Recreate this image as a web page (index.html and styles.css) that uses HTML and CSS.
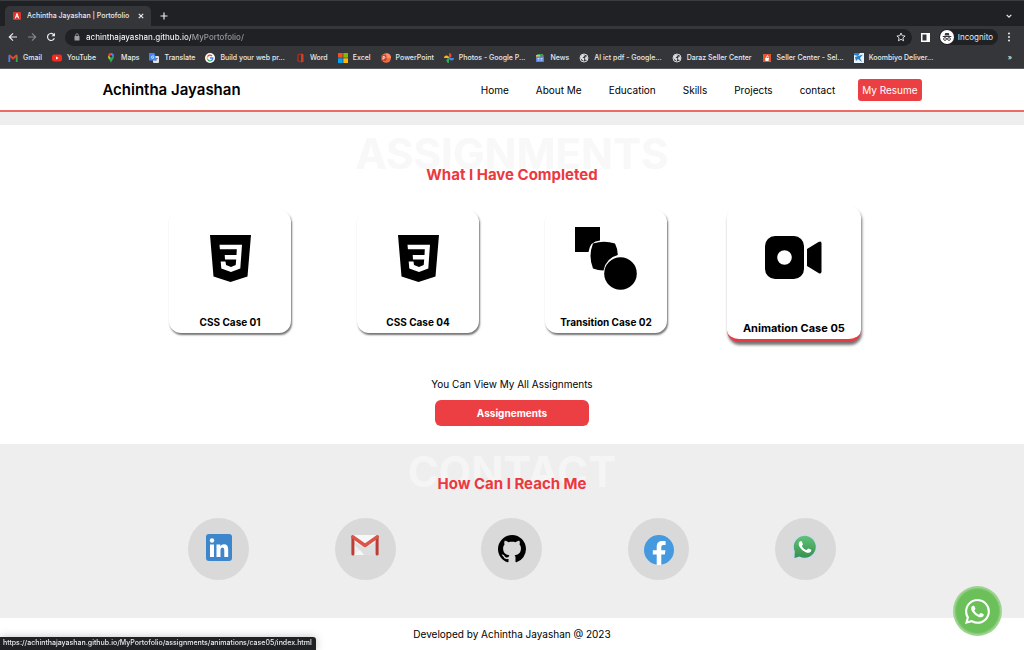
FILE: index.html
```html
<!DOCTYPE html>
<html lang="en">
<head>
<meta charset="utf-8">
<meta name="viewport" content="width=device-width, initial-scale=1">
<title>Achintha Jayashan | Portofolio</title>
<link rel="stylesheet" href="styles.css">
</head>
<body>
<svg class="defs" aria-hidden="true">
  <symbol id="whatsapp" viewBox="0 0 16 16"><path d="M13.601 2.326A7.85 7.85 0 0 0 7.994 0C3.627 0 .068 3.558.064 7.926c0 1.399.366 2.76 1.057 3.965L0 16l4.204-1.102a7.9 7.9 0 0 0 3.79.965h.004c4.368 0 7.926-3.558 7.93-7.93A7.9 7.9 0 0 0 13.6 2.326zM7.994 14.521a6.6 6.6 0 0 1-3.356-.92l-.24-.144-2.494.654.666-2.433-.156-.251a6.56 6.56 0 0 1-1.007-3.505c0-3.626 2.957-6.584 6.591-6.584a6.56 6.56 0 0 1 4.66 1.931 6.56 6.56 0 0 1 1.928 4.66c-.004 3.639-2.961 6.592-6.592 6.592"/></symbol>
  <symbol id="handset" viewBox="0 0 16 16"><path d="M11.609 9.587c-.197-.099-1.17-.578-1.353-.646-.182-.065-.315-.099-.445.099-.133.197-.513.646-.627.775-.114.133-.232.148-.43.05-.197-.1-.836-.308-1.592-.985-.59-.525-.985-1.175-1.103-1.372-.114-.198-.011-.304.088-.403.087-.088.197-.232.296-.346.1-.114.133-.198.198-.33.065-.134.034-.248-.015-.347-.05-.099-.445-1.076-.612-1.47-.16-.389-.323-.335-.445-.34-.114-.007-.247-.007-.38-.007a.73.73 0 0 0-.529.247c-.182.198-.691.677-.691 1.654s.71 1.916.81 2.049c.098.133 1.394 2.132 3.383 2.992.47.205.84.326 1.129.418.475.152.904.129 1.246.08.38-.058 1.171-.48 1.338-.943.164-.464.164-.86.114-.943-.049-.084-.182-.133-.38-.232"/></symbol>
  <symbol id="css3" viewBox="0 0 41 47"><path fill-rule="evenodd" d="M0 0H41L37.5 41.5 20.5 47 3.5 41.5ZM9.5 9.7 9.9 14.3H26.8L26.5 20H14.7L15 24.5H26.2L25.7 30 21 32 16 30 15.5 26.5H10.7L11.3 33.5 21 37 30.3 33.5 32 9.7Z"/></symbol>
  <symbol id="globe" viewBox="0 0 10 10"><circle cx="5" cy="5" r="4" fill="none" stroke="#dcdde0" stroke-width="1"/><path fill="#dcdde0" d="M1.5 3 4 1.5 6 2 5 3.5 3.5 4.5 5.5 5.5 4.5 8.5 3.5 7 1.5 5.5ZM6.5 3.5 8.5 3.5V6L7 7.5 6 6Z"/></symbol>
</svg>

<div class="browser">
  <div class="tabs">
    <div class="tab">
      <svg class="favicon" viewBox="0 0 8 8" aria-hidden="true"><rect width="8" height="8" rx="1" fill="#d8382c"/><path d="M2.2 6.5 4 1.5 5.8 6.5M3 4.8H5" fill="none" stroke="#fff" stroke-width="1"/></svg>
      <span class="tab-title">Achintha Jayashan | Portofolio</span>
      <button class="icon-btn" aria-label="Close tab"><svg width="6" height="6" viewBox="0 0 6 6"><path d="M.8.8 5.2 5.2M5.2.8.8 5.2" class="line"/></svg></button>
    </div>
    <button class="icon-btn" aria-label="New tab"><svg width="8" height="8" viewBox="0 0 8 8"><path d="M4 .5V7.5M.5 4H7.5" class="line"/></svg></button>
    <button class="icon-btn tab-search" aria-label="Search tabs"><svg width="6" height="6" viewBox="0 0 6 6"><path d="M.7 1.8 3 4.2 5.3 1.8" class="line"/></svg></button>
  </div>
  <div class="toolbar">
    <button class="icon-btn" aria-label="Back"><svg width="10" height="10" viewBox="0 0 10 10"><path d="M9 5H1.5M5 1.3 1.3 5 5 8.7" class="line"/></svg></button>
    <button class="icon-btn dim" aria-label="Forward"><svg width="10" height="10" viewBox="0 0 10 10"><path d="M1 5H8.5M5 1.3 8.7 5 5 8.7" class="line"/></svg></button>
    <button class="icon-btn" aria-label="Reload"><svg width="10" height="10" viewBox="0 0 10 10"><path d="M8.3 6.2A3.5 3.5 0 1 1 7.5 2.5L8.5 3.5" class="line"/><path d="M9 .8V4.3H5.5Z" fill="currentColor"/></svg></button>
    <div class="address">
      <svg width="6" height="8" viewBox="0 0 6 8" aria-hidden="true"><rect x=".5" y="3" width="5" height="4.5" rx=".6" fill="#9aa0a6"/><path d="M1.7 3V2a1.3 1.3 0 0 1 2.6 0V3" fill="none" stroke="#9aa0a6" stroke-width=".8"/></svg>
      <input class="url" type="text" aria-label="Address" value="achinthajayashan.github.io/MyPortofolio/">
      <button class="icon-btn" aria-label="Bookmark this page"><svg width="10" height="10" viewBox="0 0 10 10"><path d="M5 1 6.2 3.7 9.1 4 6.9 5.9 7.6 8.8 5 7.3 2.4 8.8 3.1 5.9.9 4 3.8 3.7Z" fill="none" stroke="currentColor" stroke-width=".9"/></svg></button>
    </div>
    <button class="icon-btn" aria-label="Side panel"><svg width="9" height="9" viewBox="0 0 9 9"><path fill="#fff" fill-rule="evenodd" d="M0 0H9V9H0ZM1.5 1.5V7.5H5.5V1.5Z"/></svg></button>
    <button class="incognito"><svg width="14" height="14" viewBox="0 0 14 14" aria-hidden="true"><circle cx="7" cy="7" r="7" fill="#fff"/><path fill="#35363a" d="M4.5 5.5 5.3 3H8.7L9.5 5.5ZM2.7 6H11.3V7H2.7Z"/><g fill="none" stroke="#35363a" stroke-width=".9"><circle cx="5" cy="9" r="1.4"/><circle cx="9" cy="9" r="1.4"/><path d="M6.4 8.7H7.6"/></g></svg>Incognito</button>
    <button class="icon-btn" aria-label="Menu"><svg width="4" height="10" viewBox="0 0 4 10" fill="currentColor"><circle cx="2" cy="1.5" r="1"/><circle cx="2" cy="5" r="1"/><circle cx="2" cy="8.5" r="1"/></svg></button>
  </div>
  <nav class="bookmarks" aria-label="Bookmarks">
    <a href="#"><svg viewBox="0 0 10 10"><path d="M1.3 9V2.5" stroke="#4285f4" stroke-width="1.8"/><path d="M8.7 9V2.5" stroke="#34a853" stroke-width="1.8"/><path d="M1 2 5 5.5 9 2" fill="none" stroke="#ea4335" stroke-width="2"/></svg>Gmail</a>
    <a href="#"><svg viewBox="0 0 10 10"><rect y="1.5" width="10" height="7" rx="2" fill="#f52b20"/><path fill="#fff" d="M4 3.5V6.5L6.6 5Z"/></svg>YouTube</a>
    <a href="#"><svg viewBox="0 0 10 10"><path fill="#34a853" d="M5 10C4.5 7.5 2 6 2 3.5L5 0 8 3.5C8 6 5.5 7.5 5 10Z"/><path fill="#4285f4" d="M5 0A3.2 3.2 0 0 1 8 3L5 4Z"/><path fill="#ea4335" d="M5 0A3.2 3.2 0 0 0 2 3L5 4Z"/><path fill="#fbbc04" d="M2 3 5 4 3 6.5Z"/><circle cx="5" cy="3.4" r="1.2" fill="#35363a"/></svg>Maps</a>
    <a href="#"><svg viewBox="0 0 10 10"><rect x="4" y="3" width="6" height="7" rx="1" fill="#dfe1e5"/><path d="M6 5.5H9M7.5 5V6L6.5 8" fill="none" stroke="#6b7075" stroke-width=".7"/><path fill="#4285f4" d="M0 0H5.5L7.5 7.5H0Z"/><path d="M5 3H3.5A1.2 1.2 0 1 0 4.8 4.2H3.8" fill="none" stroke="#fff" stroke-width=".7"/></svg>Translate</a>
    <a href="#"><svg viewBox="0 0 10 10"><circle cx="5" cy="5" r="5" fill="#fff"/><g fill="none" stroke-width="1.3"><path stroke="#ea4335" d="M2.5 3.7A2.8 2.8 0 0 1 7 3"/><path stroke="#fbbc04" d="M2.5 3.7A2.8 2.8 0 0 0 2.5 6.3"/><path stroke="#34a853" d="M2.5 6.3A2.8 2.8 0 0 0 6.8 7.2"/><path stroke="#4285f4" d="M5 5H7.8A2.8 2.8 0 0 1 6.8 7.2"/></g></svg>Build your web pr...</a>
    <a href="#"><svg viewBox="0 0 10 10"><path fill="#d83b20" d="M6 .5 8.5 1.3V8.7L6 9.5Z"/><path d="M6 1 3 2V7L2 7.5M2.5 7.5 6 9" fill="none" stroke="#b92b1b" stroke-width="1.3"/></svg>Word</a>
    <a href="#"><svg viewBox="0 0 10 10"><path fill="#f25022" d="M0 0H4.7V4.7H0Z"/><path fill="#7fba00" d="M5.3 0H10V4.7H5.3Z"/><path fill="#00a4ef" d="M0 5.3H4.7V10H0Z"/><path fill="#ffb900" d="M5.3 5.3H10V10H5.3Z"/></svg>Excel</a>
    <a href="#"><svg viewBox="0 0 10 10"><circle cx="5.2" cy="5" r="4.8" fill="#ed6c47"/><path fill="#ff8f6b" d="M5.2.2A4.8 4.8 0 0 1 10 5H5.2Z"/><rect y="2.3" width="5.4" height="5.4" rx=".6" fill="#c43e1c"/><path d="M2 6.7V3.5H3A.9.9 0 0 1 3 5.4H2" fill="none" stroke="#fff" stroke-width=".8"/></svg>PowerPoint</a>
    <a href="#"><svg viewBox="0 0 10 10"><path fill="#ea4335" d="M5 0A2.5 2.5 0 0 1 5 5Z"/><path fill="#4285f4" d="M10 5A2.5 2.5 0 0 1 5 5Z"/><path fill="#34a853" d="M5 10A2.5 2.5 0 0 1 5 5Z"/><path fill="#fbbc04" d="M0 5A2.5 2.5 0 0 1 5 5Z"/></svg>Photos - Google P...</a>
    <a href="#"><svg viewBox="0 0 10 10"><path fill="#34a853" d="M2 1H8V4H2Z"/><path fill="#ea4335" d="M6.5 1.5 9 2 8 5Z"/><path fill="#fbbc04" d="M1 2H5V4H1Z"/><rect x="1" y="3.5" width="8" height="5.5" rx=".7" fill="#5387ec"/><path d="M2.5 5.5H4.5M2.5 7H4.5M5.5 5.5H7.5M5.5 7H7.5" stroke="#fff" stroke-width=".7"/></svg>News</a>
    <a href="#"><svg><use href="#globe"/></svg>AI ict pdf - Google...</a>
    <a href="#"><svg><use href="#globe"/></svg>Daraz Seller Center</a>
    <a href="#"><svg viewBox="0 0 10 10"><rect x="1" y="1" width="8" height="8" fill="#e4572b"/><path fill="#fff" d="M3 5H7L6.5 8H3.5Z"/><path d="M4 5 5.5 2.5 6.5 4.5" fill="none" stroke="#fff" stroke-width=".8"/></svg>Seller Center - Sel...</a>
    <a href="#"><svg viewBox="0 0 10 10"><rect width="10" height="10" fill="#e8f2fa"/><path fill="#2b80c5" d="M0 0H6L4 3 0 2ZM1 4 9 1.5 6 5 8 9 4 6 2 8Z"/></svg>Koombiyo Deliver...</a>
    <a class="more" href="#" aria-label="More bookmarks">»</a>
  </nav>
</div>

<header class="site-header">
  <h1 class="brand">Achintha Jayashan</h1>
  <nav class="site-nav" aria-label="Main">
    <a href="#">Home</a>
    <a href="#">About Me</a>
    <a href="#">Education</a>
    <a href="#">Skills</a>
    <a href="#">Projects</a>
    <a href="#contact">contact</a>
    <a class="resume" href="#">My Resume</a>
  </nav>
</header>

<main>
  <section class="assignments">
    <p class="watermark" aria-hidden="true">ASSIGNMENTS</p>
    <h2 class="heading">What I Have Completed</h2>
    <div class="cards">
      <a class="card" href="#"><span class="card-art"><svg width="41" height="47"><use href="#css3"/></svg></span>CSS Case 01</a>
      <a class="card" href="#"><span class="card-art"><svg width="41" height="47"><use href="#css3"/></svg></span>CSS Case 04</a>
      <a class="card" href="#"><span class="card-art"><svg width="62" height="64" viewBox="0 0 62 64"><path d="M0 0H25V13.5Q15 14 13.5 25H0Z"/><path d="M18 16.5Q29 13 40 16.5 42.5 21 42.8 28 31 31 28.5 43.5 23 43.5 18 41.5 13 29 18 16.5Z"/><circle cx="45.5" cy="46.5" r="16.3"/></svg></span>Transition Case 02</a>
      <a class="card active" href="#"><span class="card-art"><svg width="58" height="44" viewBox="0 0 58 44"><path fill-rule="evenodd" d="M10 0H29A10 10 0 0 1 39 10V33A10 10 0 0 1 29 43H10A10 10 0 0 1 0 33V10A10 10 0 0 1 10 0ZM19.5 14.2A7.3 7.3 0 1 0 19.5 28.8 7.3 7.3 0 1 0 19.5 14.2Z"/><path d="M42 13 53.5 6Q56.5 4.500 56.5 7.5V35.5Q56.5 38.5 53.5 37L42 30Z"/></svg></span>Animation Case 05</a>
    </div>
    <p class="note">You Can View My All Assignments</p>
    <button class="view-all">Assignements</button>
  </section>

  <section class="contact" id="contact">
    <p class="watermark" aria-hidden="true">CONTACT</p>
    <h2 class="heading">How Can I Reach Me</h2>
    <div class="channels">
      <a class="channel" href="#" aria-label="LinkedIn"><svg width="32" height="32" viewBox="0 0 32 32"><rect x="3" y="1" width="26" height="27" rx="3" fill="#3d86cc"/><circle cx="9" cy="7.5" r="2.2" fill="#fff"/><path fill="#fff" d="M7 11.500H11V24H7ZM13.5 11.500H17.300V13.300Q18.500 11.200 21 11.200 25.200 11.200 25.200 16.500V24H21.300V17.300Q21.300 14.600 19.500 14.600 17.500 14.600 17.500 17.500V24H13.500Z"/></svg></a>
      <a class="channel" href="#" aria-label="Gmail"><svg width="32" height="32" viewBox="0 0 32 32"><path fill="#eee" d="M4 2H28V22H4Z"/><path fill="#dedede" d="M5 9 16 15 27 9V22H15L5 11Z"/><path fill="#f7f7f7" d="M5 2H27L16 11ZM5 22 11 17 15 22Z"/><path d="M3.9 4V21M28.1 4V21" stroke="#bd3c36" stroke-width="3" stroke-linecap="round"/><path d="M3.8 3.8 16 12.5 28.2 3.8" fill="none" stroke="#db5349" stroke-width="3.5" stroke-linejoin="round" stroke-linecap="round"/></svg></a>
      <a class="channel" href="#" aria-label="GitHub"><svg width="28" height="28" viewBox="0 0 16 16"><path d="M8 0C3.58 0 0 3.58 0 8c0 3.54 2.29 6.53 5.47 7.59.4.07.55-.17.55-.38 0-.19-.01-.82-.01-1.49-2.01.37-2.53-.49-2.69-.94-.09-.23-.48-.94-.82-1.13-.28-.15-.68-.52-.01-.53.63-.01 1.08.58 1.23.82.72 1.21 1.87.87 2.33.66.07-.52.28-.87.51-1.07-1.78-.2-3.64-.89-3.64-3.95 0-.87.31-1.59.82-2.15-.08-.2-.36-1.02.08-2.12 0 0 .67-.21 2.2.82.64-.18 1.32-.27 2-.27s1.36.09 2 .27c1.53-1.04 2.2-.82 2.2-.82.44 1.1.16 1.92.08 2.12.51.56.82 1.27.82 2.15 0 3.07-1.87 3.75-3.65 3.95.29.25.54.73.54 1.48 0 1.07-.01 1.93-.01 2.2 0 .21.15.46.55.38A8.01 8.01 0 0 0 16 8c0-4.42-3.58-8-8-8z"/></svg></a>
      <a class="channel" href="#" aria-label="Facebook"><svg width="32" height="32" viewBox="0 0 32 32"><circle cx="16" cy="17" r="15" fill="#4599df"/><path fill="#fff" d="M13.7 32V21.5H9.8V17.2H13.7V13.5Q13.7 8 19.3 8H22.6V12H20.3Q18.3 12 18.3 14V17.2H22.5L21.8 21.5H18.3V32Z"/></svg></a>
      <a class="channel" href="#" aria-label="WhatsApp"><svg width="32" height="32" viewBox="0 0 32 32"><defs><linearGradient id="wa" x1="0" y1="0" x2="0" y2="1"><stop offset="0" stop-color="#61c27b"/><stop offset="1" stop-color="#36904d"/></linearGradient></defs><path fill="#d0dae7" d="M2 28.5 3.500 20A13.300 13.300 0 1 1 9 25.800Z"/><path fill="url(#wa)" d="M5.500 25 5.800 18.500A11 11 0 1 1 10.500 23.500Z"/><use href="#handset" x="3.500" y="1.500" width="25" height="25" fill="#fff"/></svg></a>
    </div>
  </section>
</main>

<footer class="site-footer">Developed by Achintha Jayashan @ 2023</footer>

<a class="chat" href="#" aria-label="Chat on WhatsApp"><svg width="25" height="25" viewBox="0 0 16 16" fill="#fff"><use href="#whatsapp"/><use href="#handset"/></svg></a>
<div class="status">https://achinthajayashan.github.io/MyPortofolio/assignments/animations/case05/index.html</div>
</body>
</html>
```

FILE: styles.css
```css
* { box-sizing: border-box; }

body {
  margin: 0;
  min-height: 100vh;
  display: flex;
  flex-direction: column;
  background: #fff;
  color: #000;
  font-family: Inter, "Liberation Sans", sans-serif;
  font-size: 10px;
  line-height: 14px;
}

h1, h2, p { margin: 0; }
a { color: inherit; text-decoration: none; }
svg { display: block; flex: none; }
button { border: 0; font: inherit; color: inherit; cursor: pointer; }
.defs { position: absolute; width: 0; height: 0; }

/* Browser window */
.browser {
  background: #35363a;
  color: #e8eaed;
  font-size: 7px;
  font-weight: 500;
  line-height: 10px;
  border-bottom: 1px solid #5b5c60;
}
.line { fill: none; stroke: currentColor; stroke-width: 1.2; }
.icon-btn { display: flex; padding: 0; background: none; }
.dim { color: #85878b; }

.tabs {
  display: flex;
  align-items: center;
  gap: 9px;
  height: 26px;
  padding: 5px 12px 0 5px;
  background: #202124;
  border-top: 1px solid #3b3c40;
}
.tab {
  display: flex;
  align-items: center;
  align-self: stretch;
  gap: 6px;
  width: 146px;
  padding: 0 7px 0 8px;
  border-radius: 5px 5px 0 0;
  background: #35363a;
}
.favicon { width: 8px; height: 8px; }
.tab-title { flex: 1; white-space: nowrap; }
.tab-search { margin-left: auto; }

.toolbar {
  display: flex;
  align-items: center;
  gap: 9px;
  height: 21px;
  padding: 1px 13px 0 8px;
}
.address {
  flex: 1;
  display: flex;
  align-items: center;
  gap: 6px;
  height: 17px;
  padding: 0 6px 0 9px;
  border-radius: 9px;
  background: #202124;
}
.url {
  flex: 1;
  min-width: 0;
  padding: 0;
  border: 0;
  outline: 0;
  font: inherit;
  font-size: 8px;
  line-height: 12px;
  color: transparent;
  background: linear-gradient(90deg, #fff 105px, #9aa0a6 105px);
  background-clip: text;
  -webkit-background-clip: text;
}
.incognito {
  display: flex;
  align-items: center;
  gap: 4px;
  padding: 1px 5px 1px 1px;
  border-radius: 8px;
  background: #202124;
  font-size: 8px;
  font-weight: 400;
}

.bookmarks {
  display: flex;
  align-items: center;
  gap: 10px;
  height: 21px;
  padding: 0 12px 0 8px;
  white-space: nowrap;
}
.bookmarks a { display: flex; align-items: center; gap: 5px; }
.bookmarks svg { width: 10px; height: 10px; }
.bookmarks .more { margin-left: auto; }

/* Site header */
.site-header {
  display: flex;
  align-items: center;
  justify-content: space-between;
  height: 43px;
  padding: 0 10%;
  border-bottom: 2px solid #ec6b64;
}
.brand { font-size: 15px; line-height: 20px; font-weight: 600; }
.site-nav { display: flex; align-items: center; gap: 27px; }
.resume {
  margin-left: -4px;
  padding: 4px;
  border-radius: 3px;
  background: #ec3f44;
  color: #fff;
}

/* Sections */
.watermark {
  color: #f8f8f8;
  font-size: 42px;
  line-height: 48px;
  font-weight: 700;
}
.heading {
  position: relative;
  margin-top: -15px;
  color: #ec3840;
  font-size: 15px;
  line-height: 24px;
  font-weight: 700;
}
.assignments, .contact {
  display: flex;
  flex-direction: column;
  align-items: center;
}
.assignments {
  padding: 5px 0 18px;
  border-top: 13px solid #eee;
}
.cards {
  align-self: stretch;
  display: grid;
  grid-template-columns: repeat(4, 1fr);
  align-items: start;
  justify-items: center;
  margin-top: 23px;
  padding: 0 13.3%;
}
.card {
  display: flex;
  flex-direction: column;
  align-items: center;
  width: 122px;
  padding-bottom: 4px;
  border-radius: 12px;
  background: #fff;
  box-shadow: 1px 2px 2px rgba(0, 0, 0, .55);
  font-weight: 700;
}
.card-art { display: flex; align-items: center; height: 105px; padding-bottom: 8px; }
.card.active {
  width: 134px;
  margin-top: -4px;
  border-bottom: 3px solid #ec3840;
  box-shadow: 1px 3px 3px rgba(0, 0, 0, .55);
  font-size: 11px;
}
.active .card-art { height: 115px; padding-bottom: 12px; }
.note { margin-top: 35px; }
.view-all {
  width: 15%;
  min-width: 120px;
  margin-top: 9px;
  padding: 6px;
  border-radius: 6px;
  background: #ec3f44;
  color: #fff;
  font-weight: 700;
}

.contact { padding: 4px 0 38px; background: #eee; }
.contact .watermark { color: #f5f5f5; }
.contact .heading { margin-top: -24px; }
.channels {
  align-self: stretch;
  display: grid;
  grid-template-columns: repeat(5, 1fr);
  place-items: center;
  margin-top: 22px;
  padding: 0 14.2%;
}
.channel {
  display: flex;
  align-items: center;
  justify-content: center;
  width: 61px;
  height: 62px;
  border-radius: 50%;
  background: #d9d9d9;
}

.site-footer { flex: 1; padding: 9px 0; text-align: center; }

/* Overlays */
.chat {
  position: fixed;
  right: 22px;
  bottom: 14px;
  display: flex;
  align-items: center;
  justify-content: center;
  width: 49px;
  height: 50px;
  border: 2px solid #9dd391;
  border-radius: 50%;
  background: #6cc05a;
  box-shadow: inset 0 0 0 1px #80c973;
}
.status {
  position: fixed;
  left: 0;
  bottom: 0;
  padding: 1px 4px 2px 3px;
  border-top-right-radius: 3px;
  background: #202124;
  box-shadow: 0 0 8px rgba(0, 0, 0, .25);
  color: #e8eaed;
  font-size: 7px;
  font-weight: 500;
  line-height: 10px;
}
```
